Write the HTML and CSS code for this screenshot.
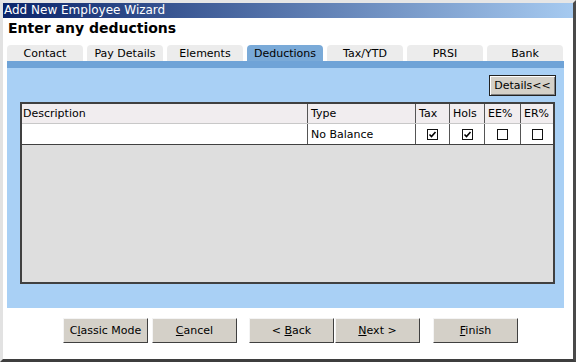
FILE: index.html
```html
<!DOCTYPE html>
<html lang="en">
<head>
  <meta charset="UTF-8">
  <title>Add New Employee Wizard</title>
  <link rel="stylesheet" href="styles.css">
</head>
<body>
  <div class="window">
    <div class="title-bar">Add New Employee Wizard</div>
    <h1 class="step-title">Enter any deductions</h1>

    <div class="content">
      <ul class="tabs">
        <li class="tab">Contact</li>
        <li class="tab">Pay Details</li>
        <li class="tab">Elements</li>
        <li class="tab active">Deductions</li>
        <li class="tab">Tax/YTD</li>
        <li class="tab">PRSI</li>
        <li class="tab">Bank</li>
      </ul>
      <div class="tab-strip"></div>

      <section class="panel">
        <div class="toolbar">
          <button class="details-btn" type="button">Details&lt;&lt;</button>
        </div>

        <div class="grid">
          <div class="grid-row grid-head">
            <div class="cell">Description</div>
            <div class="cell">Type</div>
            <div class="cell">Tax</div>
            <div class="cell">Hols</div>
            <div class="cell">EE%</div>
            <div class="cell">ER%</div>
          </div>
          <div class="grid-row grid-data">
            <div class="cell"></div>
            <div class="cell">No Balance</div>
            <div class="cell check-cell"><span class="check"><svg viewBox="0 0 9 9"><path d="M1.5 4.5 L3.5 6.5 L7.5 2" fill="none" stroke="#000" stroke-width="1.6"/></svg></span></div>
            <div class="cell check-cell"><span class="check"><svg viewBox="0 0 9 9"><path d="M1.5 4.5 L3.5 6.5 L7.5 2" fill="none" stroke="#000" stroke-width="1.6"/></svg></span></div>
            <div class="cell check-cell"><span class="check"></span></div>
            <div class="cell check-cell"><span class="check"></span></div>
          </div>
          <div class="grid-empty"></div>
        </div>
      </section>
    </div>

    <div class="buttons">
      <button class="btn" type="button">C<u>l</u>assic Mode</button>
      <button class="btn cancel" type="button"><u>C</u>ancel</button>
      <button class="btn back" type="button">&lt; <u>B</u>ack</button>
      <button class="btn next" type="button"><u>N</u>ext &gt;</button>
      <button class="btn finish" type="button"><u>F</u>inish</button>
    </div>
  </div>
</body>
</html>
```

FILE: styles.css
```css
body {
  margin: 0;
  font-family: "DejaVu Sans", Verdana, sans-serif;
  font-size: 11px;
  color: #000;
  background: #fff;
}
.window {
  width: 576px;
  height: 362px;
  box-sizing: border-box;
  border-top: 3px solid #e6e6e6;
  border-left: 3px solid #e2e2e2;
  border-right: 3px solid #4a4a4a;
  border-bottom: 3px solid #3e3e3e;
  background: #fff;
}
.title-bar {
  height: 15px;
  line-height: 15px;
  padding-left: 1px;
  background: linear-gradient(to right, #0a246a, #a6caf0);
  color: #fff;
  font-size: 12px;
  white-space: nowrap;
}
.step-title {
  margin: 0;
  height: 27px;
  padding: 2px 0 0 5px;
  box-sizing: border-box;
  font-size: 14px;
  font-weight: bold;
}
.content {
  margin: 0 9px 0 4px;
}
.tabs {
  display: flex;
  gap: 4px;
  margin: 0;
  padding: 0;
  list-style: none;
}
.tab {
  width: 76px;
  height: 16px;
  line-height: 18px;
  text-align: center;
  background: #ececec;
  border-radius: 4px 4px 0 0;
}
.tab.active {
  background: #7aaad8;
}
.tab-strip {
  height: 7px;
  background: #6fa3d7;
}
.panel {
  height: 240px;
  box-sizing: border-box;
  padding: 7px 8px 0 13px;
  background: #a9d0f5;
}
.toolbar {
  display: flex;
  justify-content: flex-end;
  margin-bottom: 6px;
}
.details-btn {
  width: 67px;
  height: 21px;
  padding: 0;
  font: inherit;
  background: #d4d0c8;
  border: 1px solid #222;
  box-shadow: inset 1px 1px 0 #fff, inset -1px -1px 0 #808080;
}
.grid {
  display: flex;
  flex-direction: column;
  width: 535px;
  height: 182px;
  box-sizing: border-box;
  border: 2px solid #404040;
}
.grid-row {
  display: grid;
  grid-template-columns: 285px 108px 34px 35px 36px 1fr;
}
.grid-head {
  height: 19px;
  background: #f1edef;
  border-bottom: 1px solid #c8c8c8;
}
.grid-data {
  height: 20px;
  background: #fff;
  border-bottom: 1px solid #404040;
}
.cell {
  display: flex;
  align-items: center;
  padding: 0 3px;
  border-left: 1px solid #555;
  white-space: nowrap;
}
.cell:first-child {
  border-left: none;
  padding-left: 1px;
}
.check-cell {
  justify-content: center;
}
.check {
  display: block;
  width: 9px;
  height: 9px;
  border: 1px solid #111;
  background: #fff;
}
.check svg {
  display: block;
  width: 9px;
  height: 9px;
}
.grid-empty {
  flex: 1;
  background: #dedede;
}
.buttons {
  display: flex;
  padding: 10px 0 0 60px;
}
.btn {
  width: 85px;
  height: 25px;
  padding: 0;
  font: inherit;
  color: #000;
  background: #d4d0c8;
  border: none;
  border-top: 1px solid #f4f4f4;
  border-left: 1px solid #f4f4f4;
  border-right: 1px solid #404040;
  border-bottom: 1px solid #404040;
}
.cancel {
  margin-left: 4px;
}
.back {
  margin-left: 12px;
}
.next {
  margin-left: 1px;
}
.finish {
  margin-left: 13px;
}
```
